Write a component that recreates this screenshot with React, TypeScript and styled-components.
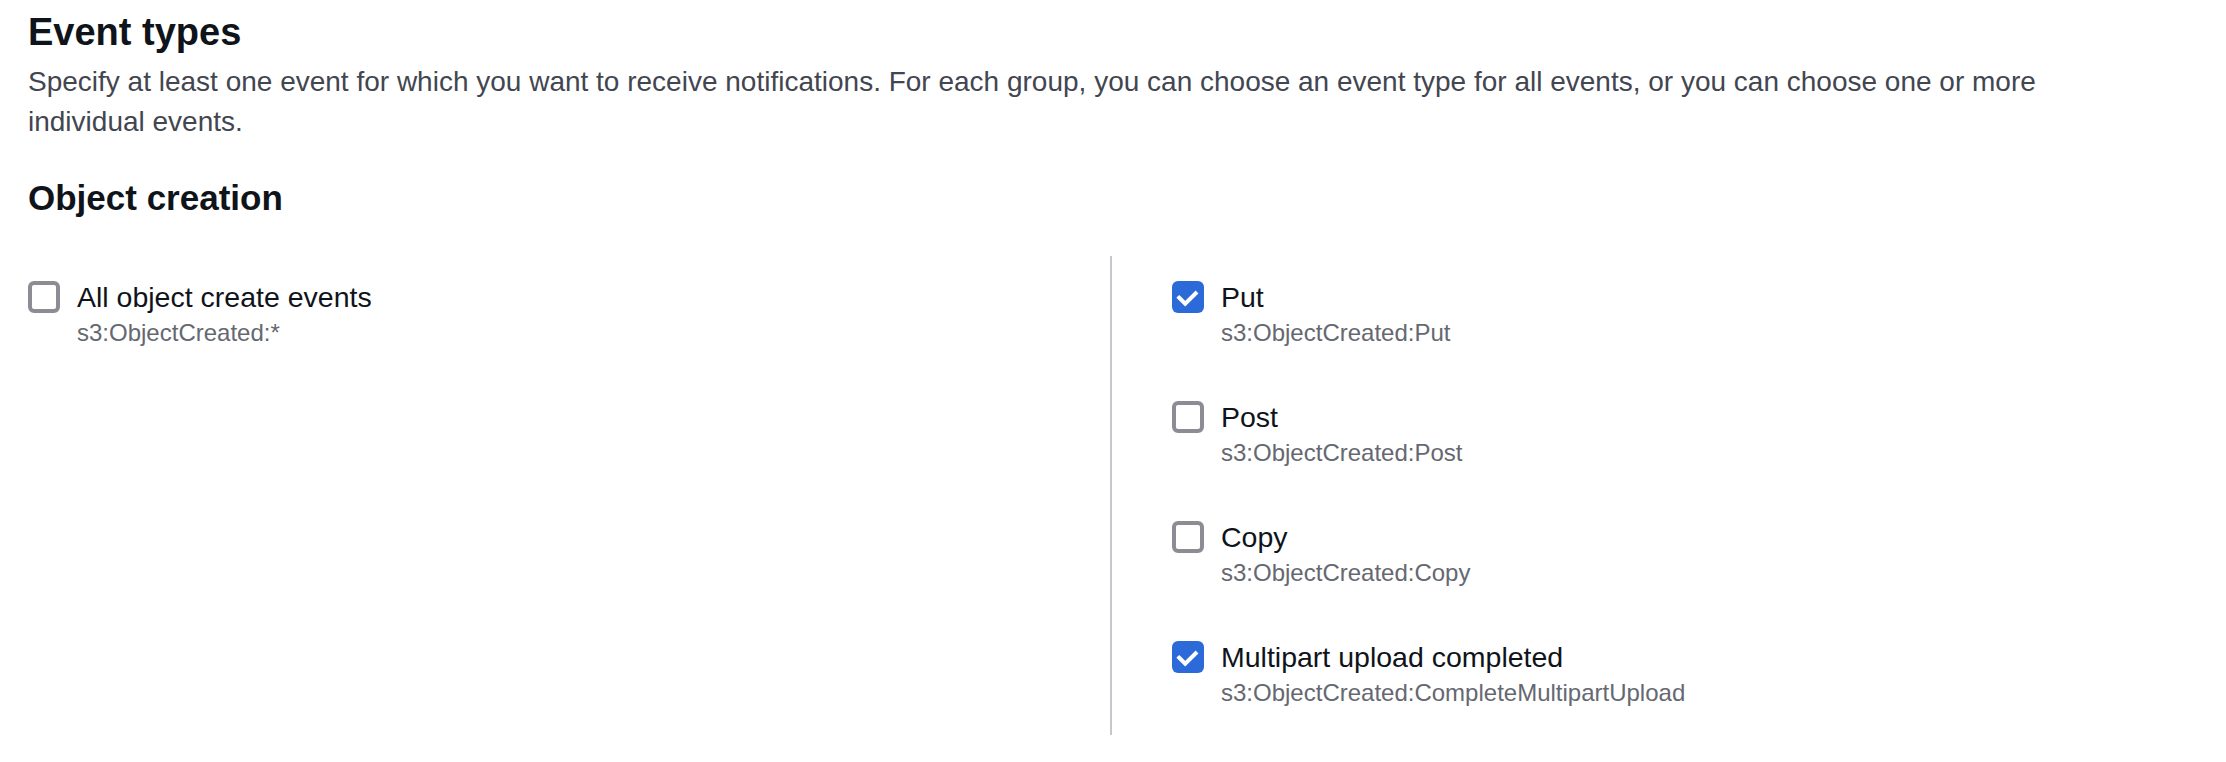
import styled, { createGlobalStyle } from "styled-components";

const GlobalStyle = createGlobalStyle`
  html, body {
    margin: 0;
    padding: 0;
    background: #ffffff;
  }
  body {
    font-family: "Liberation Sans", Arial, sans-serif;
    color: #0f141a;
  }
`;

const Page = styled.div`
  padding: 8px 28px 0 28px;
`;

const Title = styled.h2`
  margin: 0;
  font-size: 38px;
  line-height: 48px;
  font-weight: 700;
  color: #0f141a;
`;

const Description = styled.p`
  margin: 6px 0 0 0;
  max-width: 2080px;
  font-size: 28px;
  line-height: 40px;
  color: #424650;
`;

const SectionTitle = styled.h3`
  margin: 34px 0 0 0;
  font-size: 35px;
  line-height: 44px;
  font-weight: 700;
  color: #0f141a;
`;

const Columns = styled.div`
  display: grid;
  grid-template-columns: 1082px 1fr;
  margin-top: 36px;
`;

const Column = styled.div<{ $divider?: boolean }>`
  display: flex;
  flex-direction: column;
  gap: 48px;
  padding: 21px 0 26px ${(p) => (p.$divider ? "60px" : "0")};
  border-left: ${(p) => (p.$divider ? "2px solid #c6c6cd" : "none")};
`;

const Option = styled.label`
  display: grid;
  grid-template-columns: 32px 1fr;
  column-gap: 17px;
  cursor: pointer;
`;

const Box = styled.span<{ $checked: boolean }>`
  grid-row: 1;
  align-self: center;
  display: flex;
  align-items: center;
  justify-content: center;
  box-sizing: border-box;
  width: 32px;
  height: 32px;
  border-radius: 6px;
  background: ${(p) => (p.$checked ? "#2d6ad9" : "#ffffff")};
  border: ${(p) => (p.$checked ? "none" : "4px solid #8c8c94")};
`;

const Label = styled.span`
  grid-column: 2;
  grid-row: 1;
  font-size: 28.5px;
  line-height: 40px;
  color: #0f141a;
`;

const Sub = styled.span`
  grid-column: 2;
  grid-row: 2;
  font-size: 24px;
  line-height: 32px;
  color: #656871;
`;

type EventOption = {
  label: string;
  event: string;
  checked: boolean;
};

const allEvents: EventOption = {
  label: "All object create events",
  event: "s3:ObjectCreated:*",
  checked: false
};

const events: EventOption[] = [
  { label: "Put", event: "s3:ObjectCreated:Put", checked: true },
  { label: "Post", event: "s3:ObjectCreated:Post", checked: false },
  { label: "Copy", event: "s3:ObjectCreated:Copy", checked: false },
  {
    label: "Multipart upload completed",
    event: "s3:ObjectCreated:CompleteMultipartUpload",
    checked: true
  }
];

const Checkbox = ({ label, event, checked }: EventOption) => (
  <Option>
    <Box $checked={checked}>
      {checked ? (
        <svg width="32" height="32" viewBox="0 0 16 16">
          <polyline
            points="3.6,8.4 6.6,11.3 11.8,6.2"
            fill="none"
            stroke="#ffffff"
            strokeWidth="2"
            strokeLinecap="square"
            strokeLinejoin="miter"
          />
        </svg>
      ) : null}
    </Box>
    <Label>{label}</Label>
    <Sub>{event}</Sub>
  </Option>
);

export default function App() {
  return (
    <Page>
      <GlobalStyle />
      <Title>Event types</Title>
      <Description>
        Specify at least one event for which you want to receive notifications.
        For each group, you can choose an event type for all events, or you can
        choose one or more individual events.
      </Description>
      <SectionTitle>Object creation</SectionTitle>
      <Columns>
        <Column>
          <Checkbox {...allEvents} />
        </Column>
        <Column $divider>
          {events.map((e) => (
            <Checkbox key={e.event} {...e} />
          ))}
        </Column>
      </Columns>
    </Page>
  );
}
